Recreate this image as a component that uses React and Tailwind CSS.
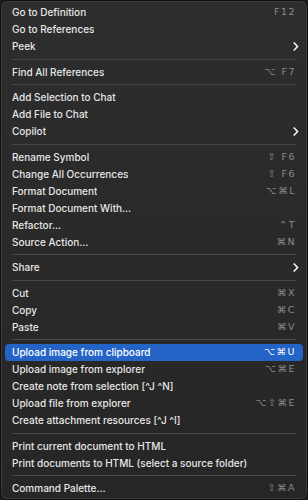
import React from 'react';

const groups = [
  [
    { label: 'Go to Definition', keys: 'F12' },
    { label: 'Go to References' },
    { label: 'Peek', sub: true },
  ],
  [{ label: 'Find All References', keys: '⌥ F7' }],
  [
    { label: 'Add Selection to Chat' },
    { label: 'Add File to Chat' },
    { label: 'Copilot', sub: true },
  ],
  [
    { label: 'Rename Symbol', keys: '⇧ F6' },
    { label: 'Change All Occurrences', keys: '⇧ F6' },
    { label: 'Format Document', keys: '⌥⌘L' },
    { label: 'Format Document With...' },
    { label: 'Refactor...', keys: '⌃T' },
    { label: 'Source Action...', keys: '⌘N' },
  ],
  [{ label: 'Share', sub: true }],
  [
    { label: 'Cut', keys: '⌘X' },
    { label: 'Copy', keys: '⌘C' },
    { label: 'Paste', keys: '⌘V' },
  ],
  [
    { label: 'Upload image from clipboard', keys: '⌥⌘U', active: true },
    { label: 'Upload image from explorer', keys: '⌥⌘E' },
    { label: 'Create note from selection [^J ^N]' },
    { label: 'Upload file from explorer', keys: '⌥⇧⌘E' },
    { label: 'Create attachment resources [^J ^I]' },
  ],
  [
    { label: 'Print current document to HTML' },
    { label: 'Print documents to HTML (select a source folder)' },
  ],
  [{ label: 'Command Palette...', keys: '⇧⌘A' }],
];

const Chevron = () => (
  <svg width="6" height="9" viewBox="0 0 6 9" fill="none" className="mr-[-3px]">
    <path d="M1.2 1 L4.6 4.5 L1.2 8" stroke="#f2f2f2" strokeWidth="1.7" strokeLinecap="round" strokeLinejoin="round" />
  </svg>
);

const Item = ({ label, keys, sub, active }) => (
  <div
    className={`h-[17px] mx-[4px] pl-[7px] pr-[7px] flex items-center justify-between rounded-[4px] ${
      active ? 'bg-[#2464c7] text-white' : 'text-[#e6e6e6]'
    }`}
  >
    <span className="truncate">{label}</span>
    {keys && (
      <span
        className={`text-[9.5px] tracking-[1.5px] font-['DejaVu_Sans',sans-serif] ${
          active ? 'text-white' : 'text-[#8a8a8a]'
        }`}
      >
        {keys}
      </span>
    )}
    {sub && <Chevron />}
  </div>
);

export default function App() {
  return (
    <div className="w-[308px] h-[500px] bg-[#1b1b1b]">
      <div className="h-full rounded-[7px] border border-[#101010] bg-gradient-to-b from-[#2d2d2d] to-[#262626] shadow-[inset_0_0_0_1px_#3c3c3c] pt-[3px] text-[10px] font-medium font-['Inter','Liberation_Sans',sans-serif] overflow-hidden">
        {groups.map((g, i) => (
          <div key={i}>
            {i > 0 && (
              <div className="h-[8.5px] flex items-center px-[11px]">
                <div className="h-px w-full bg-[#474747]" />
              </div>
            )}
            {g.map((it) => (
              <Item key={it.label} {...it} />
            ))}
          </div>
        ))}
      </div>
    </div>
  );
}
